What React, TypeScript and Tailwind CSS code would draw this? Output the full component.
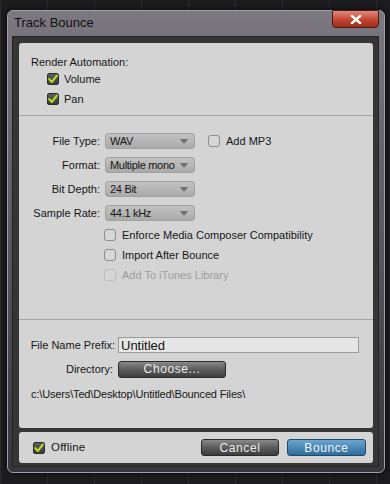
import React from 'react'

const FONT = "font-['Liberation_Sans',Arial,sans-serif]"

// ── small controls ───────────────────────────────────────────────────────────
function Check({ on, disabled }: { on?: boolean; disabled?: boolean }) {
  if (on) {
    return (
      <span className="shrink-0 w-[12px] h-[12px] rounded-[2px] border border-[#2c2c2c] bg-gradient-to-b from-[#5e5e5e] to-[#3c3c3c] flex items-center justify-center">
        <svg width="10" height="10" viewBox="0 0 10 10">
          <path d="M1.3 5.2 L3.9 7.9 L8.8 1.6" fill="none" stroke="#b6e024" strokeWidth="2.1" strokeLinecap="round" strokeLinejoin="round" />
        </svg>
      </span>
    )
  }
  return (
    <span
      className={
        'shrink-0 block w-[12px] h-[12px] rounded-[3px] border bg-[#d6d6d6] ' +
        (disabled ? 'border-[#bdbdbd]' : 'border-[#8c8c8c]')
      }
    />
  )
}

function Select({ value }: { value: string }) {
  return (
    <div className="w-[90px] h-[16px] rounded-[3px] border border-[#a2a2a2] bg-gradient-to-b from-[#c2c2c2] to-[#a9a9a9] flex items-center pl-[4px] pr-[6px] text-[11px] tracking-[-0.3px] text-[#161616]">
      <span className="flex-1 leading-none whitespace-nowrap">{value}</span>
      <svg width="8" height="5" viewBox="0 0 8 5" className="shrink-0 ml-[2px]">
        <path d="M0 0 H8 L4 5 Z" fill="#707070" />
      </svg>
    </div>
  )
}

function DarkButton({ label, w, blue }: { label: string; w: string; blue?: boolean }) {
  return (
    <button
      type="button"
      className={
        'h-[17px] rounded-[3px] border flex items-center justify-center text-[12px] tracking-[0.6px] leading-none ' +
        w +
        (blue
          ? ' border-[#1d4a6c] bg-gradient-to-b from-[#6aa6d2] to-[#2f6d9c] text-[#eef4fa]'
          : ' border-[#2a2a2a] bg-gradient-to-b from-[#8a8a8a] via-[#5c5c5c] to-[#3e3e3e] text-[#ececec]')
      }
    >
      {label}
    </button>
  )
}

function FormRow({ label, children }: { label: string; children: React.ReactNode }) {
  return (
    <div className="h-[24px] flex items-center">
      <span className="w-[86px] text-right pr-[5px]">{label}</span>
      {children}
    </div>
  )
}

function CheckRow({ label, disabled }: { label: string; disabled?: boolean }) {
  return (
    <div className="h-[20px] flex items-center gap-[6px] pl-[85px]">
      <Check disabled={disabled} />
      <span className={disabled ? 'text-[#9c9c9c]' : ''}>{label}</span>
    </div>
  )
}

export default function App() {
  return (
    <div
      className={
        'w-[390px] h-[484px] overflow-hidden pt-[10px] pl-[7px] bg-[#1d1d20] ' +
        'bg-[repeating-linear-gradient(90deg,#2b2b30_0px,#2b2b30_1px,transparent_1px,transparent_47px)] ' +
        FONT
      }
    >
      {/* Window frame */}
      <div className="w-[378px] h-[463px] rounded-[6px] border border-[#a29ea8] bg-gradient-to-b from-[#7c7882] via-[#5a5760] to-[#38363c] flex flex-col shadow-[0_0_6px_rgba(0,0,0,0.8)]">
        {/* Title bar */}
        <div className="h-[25px] flex items-start justify-between">
          <span className="pl-[6px] pt-[4px] text-[13px] text-[#111] leading-[16px]">Track Bounce</span>
          <button
            type="button"
            className="mr-[5px] mt-[-1px] w-[47px] h-[18px] rounded-b-[4px] border border-[#4a1a14] bg-gradient-to-b from-[#e08a7c] via-[#c64a36] to-[#a02a18] flex items-center justify-center"
          >
            <svg width="12" height="9" viewBox="0 0 12 9">
              <path d="M2 1 L10 8 M10 1 L2 8" stroke="#fff" strokeWidth="2.4" strokeLinecap="square" />
            </svg>
          </button>
        </div>

        {/* Client area */}
        <div className="ml-[4px] mr-[5px] mb-[5px] flex-1 bg-[#363636] border border-[#222] pt-[6px] pl-[6px] pr-[5px] pb-[3px] flex flex-col gap-[4px] text-[11px] text-[#161616]">
          <div className="h-[385px] rounded-[3px] bg-[#d4d4d4] flex flex-col">
            {/* Render automation */}
            <div className="pt-[12px] pb-[6px] border-b border-[#a6a6a6]">
              <div className="pl-[12px] h-[14px] leading-[14px]">Render Automation:</div>
              <div className="h-[20px] flex items-center gap-[5px] pl-[28px]">
                <Check on />
                <span>Volume</span>
              </div>
              <div className="h-[20px] flex items-center gap-[5px] pl-[28px]">
                <Check on />
                <span>Pan</span>
              </div>
            </div>

            {/* Format settings */}
            <div className="pt-[13px] pb-[34px] border-b border-[#a6a6a6]">
              <FormRow label="File Type:">
                <Select value="WAV" />
                <span className="ml-[13px] flex">
                  <Check />
                </span>
                <span className="ml-[6px]">Add MP3</span>
              </FormRow>
              <FormRow label="Format:">
                <Select value="Multiple mono" />
              </FormRow>
              <FormRow label="Bit Depth:">
                <Select value="24 Bit" />
              </FormRow>
              <FormRow label="Sample Rate:">
                <Select value="44.1 kHz" />
              </FormRow>
              <CheckRow label="Enforce Media Composer Compatibility" />
              <CheckRow label="Import After Bounce" />
              <CheckRow label="Add To iTunes Library" disabled />
            </div>

            {/* File location */}
            <div className="pt-[15px] flex flex-col gap-[4px]">
              <div className="h-[20px] flex items-center">
                <span className="w-[99px] text-right pr-[3px]">File Name Prefix:</span>
                <div className="w-[241px] h-[16px] border border-[#9a9a9a] bg-[#e6e6e6] flex items-center pl-[2px] text-[13px] text-[#111] leading-none">
                  Untitled
                </div>
              </div>
              <div className="h-[20px] flex items-center">
                <span className="w-[99px] text-right pr-[5px]">Directory:</span>
                <DarkButton label="Choose..." w="w-[108px]" />
              </div>
              <div className="h-[20px] mt-[1px] flex items-center pl-[12px] tracking-[-0.15px]">
                c:\Users\Ted\Desktop\Untitled\Bounced Files\
              </div>
            </div>
          </div>

          {/* Bottom bar */}
          <div className="h-[31px] rounded-[3px] bg-[#d4d4d4] flex items-center pl-[14px] pr-[7px]">
            <Check on />
            <span className="ml-[6px] text-[11.5px] tracking-[0.2px]">Offline</span>
            <div className="ml-auto flex gap-[8px]">
              <DarkButton label="Cancel" w="w-[78px]" />
              <DarkButton label="Bounce" w="w-[79px]" blue />
            </div>
          </div>
        </div>
      </div>
    </div>
  )
}
